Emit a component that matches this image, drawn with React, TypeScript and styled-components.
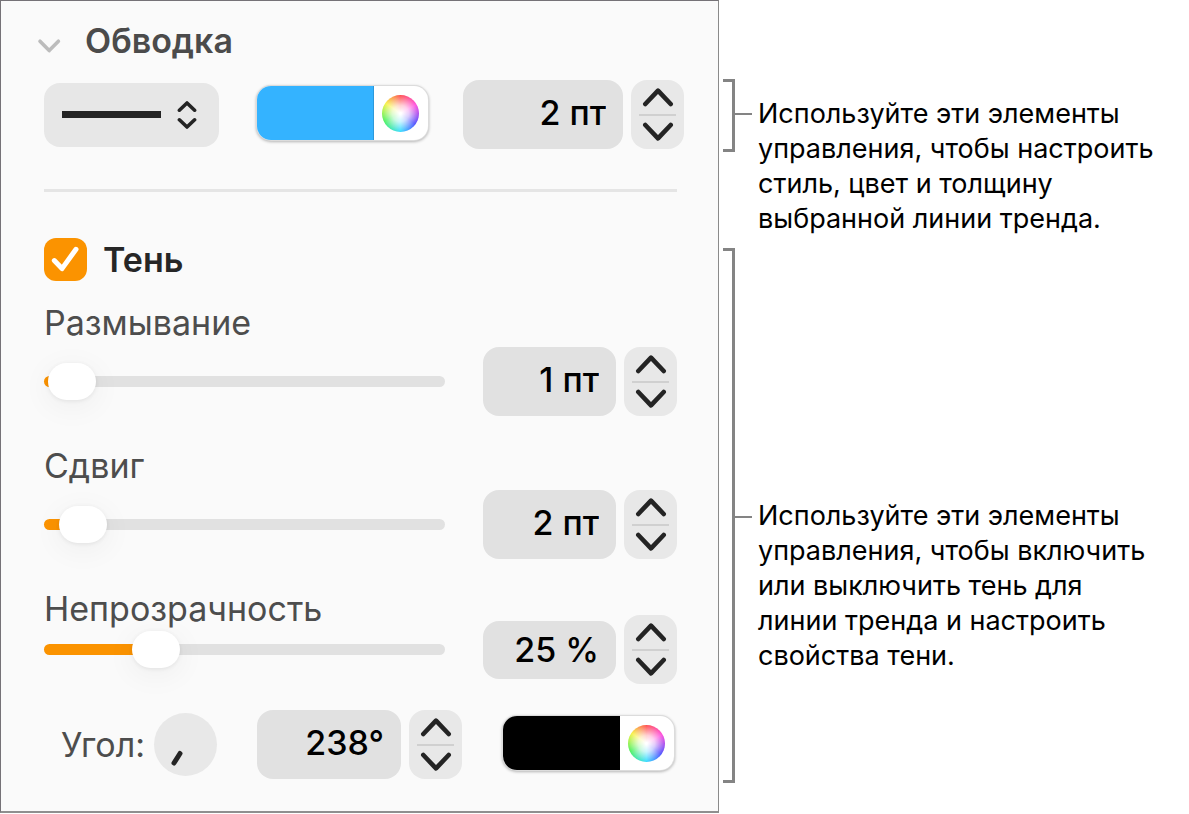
import React, { useId, useState } from "react";
import styled, { createGlobalStyle } from "styled-components";

const GlobalStyle = createGlobalStyle`
  *, *::before, *::after { box-sizing: border-box; }
  body {
    margin: 0;
    background: #fff;
    font-family: Inter, "Liberation Sans", sans-serif;
    color: #000;
  }
  button, input, select { font: inherit; color: inherit; }
  button { padding: 0; border: 0; background: none; cursor: pointer; }
  svg { display: block; }
`;

const Page = styled.main`
  display: flex;
  align-items: flex-start;
`;

const Panel = styled.section`
  flex: 0 1 719px;
  min-width: 0;
  padding: 20px 0 32px;
  background: #fafafa;
  border: 1px solid #757277;
  border-right-color: #8a8a8a;
  border-bottom: 2px solid #8f8f8f;
`;

const StrokeSection = styled.section`
  margin: 0 34px 40px 43px;
`;

const ShadowSection = styled.section`
  margin: 0 41px 0 43px;
  padding-top: 46px;
  border-top: 3px solid #e5e5e5;
`;

const Disclosure = styled.button`
  display: flex;
  align-items: center;
  gap: 24px;
  color: #4b4b4b;
  font-size: 34px;
  font-weight: 600;
  line-height: 40px;
  margin: 0 0 19px -7px;

  svg { margin-top: 10px; }
`;

const Heading = styled.h2`
  margin: 0;
  font: inherit;
`;

const ControlRow = styled.div`
  display: flex;
  align-items: center;
`;

const StylePicker = styled.div`
  position: relative;
  display: flex;
  align-items: center;
  justify-content: space-between;
  flex: 0 1 175px;
  height: 64px;
  padding: 0 22px 0 18px;
  margin-right: 38px;
  border-radius: 16px;
  background: #e7e7e7;
`;

const StyleSelect = styled.select`
  position: absolute;
  inset: 0;
  width: 100%;
  height: 100%;
  opacity: 0;
`;

const LineSample = styled.span`
  width: 99px;
  height: 7px;
  background: #242424;
`;

const Well = styled.div`
  display: flex;
  flex: none;
  width: 171px;
  height: 54px;
  margin-bottom: 3px;
  border-radius: 14px;
  overflow: hidden;
  background: #fff;
  box-shadow: 0 0 0 1px #dcdcdc, 0 1px 3px 1px rgba(0, 0, 0, 0.28);
`;

const WellColor = styled.button<{ $color: string }>`
  flex: 1;
  background: ${(p) => p.$color};
  border-right: 1px solid rgba(0, 0, 0, 0.14);
`;

const WellWheel = styled.button`
  display: grid;
  place-items: center;
  width: 54px;
  padding-right: 2px;
`;

const Wheel = styled.span`
  width: 37px;
  height: 37px;
  border-radius: 50%;
  background:
    radial-gradient(circle closest-side, #fff 5%, rgba(255, 255, 255, 0.75) 45%, rgba(255, 255, 255, 0.1) 100%),
    conic-gradient(#ff3b3b, #ff35d8 60deg, #3a3aff 125deg, #20d8ff 180deg, #35f04a 245deg, #f6f02c 305deg, #ff3b3b);
`;

const Field = styled.input<{ $width: number; $short?: boolean }>`
  flex: 0 1 ${(p) => p.$width}px;
  width: ${(p) => p.$width}px;
  min-width: 0;
  height: ${(p) => (p.$short ? 58 : 69)}px;
  padding: ${(p) => (p.$short ? "0 17px 1px" : "0 17px 4px")};
  border: 0;
  border-radius: 16px;
  outline: 0;
  background: #e1e1e1;
  font-size: 34px;
  font-weight: 500;
  text-align: right;
`;

const StepperBox = styled.div`
  display: flex;
  flex-direction: column;
  flex: none;
  width: 53px;
  height: 69px;
  margin-left: 8px;
  border-radius: 16px;
  background: #e8e8e8;
`;

const StepButton = styled.button`
  flex: 1;
  display: grid;
  place-items: center;
`;

const StepRule = styled.span`
  height: 2px;
  margin: 0 8px;
  background: #d0d0d0;
`;

const CheckRow = styled.div`
  display: flex;
  align-items: center;
  gap: 16px;
  margin-bottom: 22px;
`;

const CheckBox = styled.span`
  display: grid;
  width: 43px;
  height: 43px;

  > * { grid-area: 1 / 1; }
  svg { pointer-events: none; }
`;

const CheckInput = styled.input`
  appearance: none;
  width: 43px;
  height: 43px;
  margin: 0;
  border-radius: 12px;
  background: #dcdcdc;

  &:checked { background: #fb9300; }
`;

const CheckLabel = styled.label`
  color: #262626;
  font-size: 34px;
  font-weight: 600;
  line-height: 40px;
`;

const SliderRow = styled.div`
  display: flex;
  align-items: flex-end;
  gap: 38px;
  margin-bottom: 30px;
`;

const SliderColumn = styled.div<{ $gap: number }>`
  display: flex;
  flex-direction: column;
  flex: 1;
  min-width: 0;
  gap: ${(p) => p.$gap}px;
  padding-bottom: 16px;
`;

const Label = styled.label`
  color: #4d4d4d;
  font-size: 34px;
  line-height: 40px;
`;

const Slider = styled.input`
  appearance: none;
  display: block;
  width: 100%;
  height: 37px;
  margin: 0;
  background: none;

  &::-webkit-slider-runnable-track {
    height: 11px;
    border-radius: 6px;
    background: linear-gradient(to right, #fb9300 var(--fill), #e1e1e1 var(--fill));
  }

  &::-webkit-slider-thumb {
    appearance: none;
    width: 48px;
    height: 37px;
    margin-top: -13px;
    border-radius: 19px;
    background: #fff;
    box-shadow: 0 1px 4px rgba(0, 0, 0, 0.08), 0 6px 28px 4px rgba(0, 0, 0, 0.04);
  }
`;

const AngleRow = styled.div`
  display: flex;
  align-items: center;
  padding-left: 17px;
  margin-top: -4px;
`;

const Dial = styled.button`
  flex: none;
  width: 63px;
  height: 63px;
  margin: 0 40px 0 9px;
  border-radius: 50%;
  background: #e8e8e8;
`;

const Spacer = styled.span<{ $width: number }>`
  flex: 0 1 ${(p) => p.$width}px;
`;

const Callouts = styled.aside`
  display: flex;
  flex-direction: column;
  flex: 1;
  min-width: 0;
  gap: 12px;
  padding: 79px 16px 0 4px;
`;

const Callout = styled.div`
  display: flex;
  align-items: flex-start;
`;

const Bracket = styled.div<{ $height: number }>`
  flex: none;
  width: 12px;
  height: ${(p) => p.$height}px;
  border: solid #848484;
  border-width: 3px 3px 3px 0;
`;

const Lead = styled.div<{ $top: number }>`
  flex: none;
  width: 17px;
  height: 2px;
  margin-top: ${(p) => p.$top + 17}px;
  background: #848484;
`;

const CalloutText = styled.p<{ $top: number }>`
  margin: ${(p) => p.$top}px 0 0 6px;
  font-size: 27px;
  line-height: 35px;
`;

const ColorWell = ({ color, label }: { color: string; label: string }) => (
  <Well>
    <WellColor $color={color} aria-label={label} />
    <WellWheel aria-label="Цветовой круг">
      <Wheel />
    </WellWheel>
  </Well>
);

const Chevron = ({ down }: { down?: boolean }) => (
  <svg width="32" height="20" viewBox="0 0 32 20" fill="none" stroke="#242424" strokeWidth="4.6" strokeLinecap="round" strokeLinejoin="round">
    <path d={down ? "M3.3 3 16 16.4 28.7 3" : "M3.3 17 16 3.6 28.7 17"} />
  </svg>
);

const Stepper = ({ onStep }: { onStep: (delta: number) => void }) => (
  <StepperBox>
    <StepButton aria-label="Увеличить" onClick={() => onStep(1)}>
      <Chevron />
    </StepButton>
    <StepRule />
    <StepButton aria-label="Уменьшить" onClick={() => onStep(-1)}>
      <Chevron down />
    </StepButton>
  </StepperBox>
);

const THUMB = 48;

type SliderControlProps = {
  label: string;
  initial: number;
  max: number;
  unit: string;
  gap: number;
  short?: boolean;
};

const SliderControl = ({ label, initial, max, unit, gap, short }: SliderControlProps) => {
  const id = useId();
  const [value, setValue] = useState(initial);
  const ratio = value / max;
  const fill = `calc(${THUMB / 2}px + (100% - ${THUMB}px) * ${ratio})`;
  const step = (d: number) => setValue((v) => Math.min(max, Math.max(0, v + d)));

  return (
    <SliderRow>
      <SliderColumn $gap={gap}>
        <Label htmlFor={id}>{label}</Label>
        <Slider
          id={id}
          type="range"
          min={0}
          max={max}
          value={value}
          onChange={(e) => setValue(Number(e.target.value))}
          style={{ "--fill": fill } as React.CSSProperties}
        />
      </SliderColumn>
      <ControlRow>
        <Field $width={133} $short={short} aria-label={label} value={`${value} ${unit}`} readOnly />
        <Stepper onStep={step} />
      </ControlRow>
    </SliderRow>
  );
};

export default function App() {
  const [width, setWidth] = useState(2);
  const [angle, setAngle] = useState(238);
  const [shadow, setShadow] = useState(true);

  return (
    <>
      <GlobalStyle />
      <Page>
        <Panel>
          <StrokeSection>
            <Disclosure aria-expanded="true">
              <svg width="24" height="16" viewBox="0 0 24 16" fill="none" stroke="#bcbcbc" strokeWidth="3.6" strokeLinecap="round" strokeLinejoin="round">
                <path d="M3 3.2 12.2 12.6 21.4 3.2" />
              </svg>
              <Heading>Обводка</Heading>
            </Disclosure>
            <ControlRow>
              <StylePicker>
                <LineSample />
                <svg width="20" height="30" viewBox="0 0 20 30" fill="none" stroke="#242424" strokeWidth="3.6" strokeLinecap="round" strokeLinejoin="round">
                  <path d="M2.4 10.2 10 3 17.6 10.2M2.4 19.8 10 27 17.6 19.8" />
                </svg>
                <StyleSelect aria-label="Стиль линии">
                  <option value="solid" aria-label="Сплошная" />
                </StyleSelect>
              </StylePicker>
              <ColorWell color="#34b3ff" label="Цвет линии" />
              <Spacer $width={35} />
              <Field $width={160} aria-label="Толщина" value={`${width} пт`} readOnly />
              <Stepper onStep={(d) => setWidth((v) => Math.max(0, v + d))} />
            </ControlRow>
          </StrokeSection>

          <ShadowSection>
            <CheckRow>
              <CheckBox>
                <CheckInput id="shadow" type="checkbox" checked={shadow} onChange={(e) => setShadow(e.target.checked)} />
                <svg width="43" height="43" viewBox="0 0 43 43" fill="none" stroke="#fff" strokeWidth="5" strokeLinecap="round" strokeLinejoin="round">
                  {shadow && <path d="M10.3 22.6 18 30.6 32 11.3" />}
                </svg>
              </CheckBox>
              <CheckLabel htmlFor="shadow">Тень</CheckLabel>
            </CheckRow>

            <SliderControl label="Размывание" initial={1} max={90} unit="пт" gap={20} />
            <SliderControl label="Сдвиг" initial={2} max={48} unit="пт" gap={20} />
            <SliderControl label="Непрозрачность" initial={25} max={100} unit="%" gap={2} short />

            <AngleRow>
              <Label htmlFor="angle">Угол:</Label>
              <Dial aria-label="Угол">
                <svg width="63" height="63" viewBox="0 0 63 63" fill="none" stroke="#242424" strokeWidth="5" strokeLinecap="round">
                  <path d="M26 40.5 20 50" />
                </svg>
              </Dial>
              <Field id="angle" $width={144} value={`${angle}°`} readOnly />
              <Stepper onStep={(d) => setAngle((v) => (v + d + 360) % 360)} />
              <Spacer $width={41} />
              <ColorWell color="#000" label="Цвет тени" />
            </AngleRow>
          </ShadowSection>
        </Panel>

        <Callouts>
          <Callout>
            <Bracket $height={73} />
            <Lead $top={17} />
            <CalloutText $top={17}>
              Используйте эти элементы
              <br />
              управления, чтобы настроить
              <br />
              стиль, цвет и толщину
              <br />
              выбранной линии тренда.
            </CalloutText>
          </Callout>
          <Callout>
            <Bracket $height={535} />
            <Lead $top={251} />
            <CalloutText $top={250}>
              Используйте эти элементы
              <br />
              управления, чтобы включить
              <br />
              или выключить тень для
              <br />
              линии тренда и настроить
              <br />
              свойства тени.
            </CalloutText>
          </Callout>
        </Callouts>
      </Page>
    </>
  );
}
